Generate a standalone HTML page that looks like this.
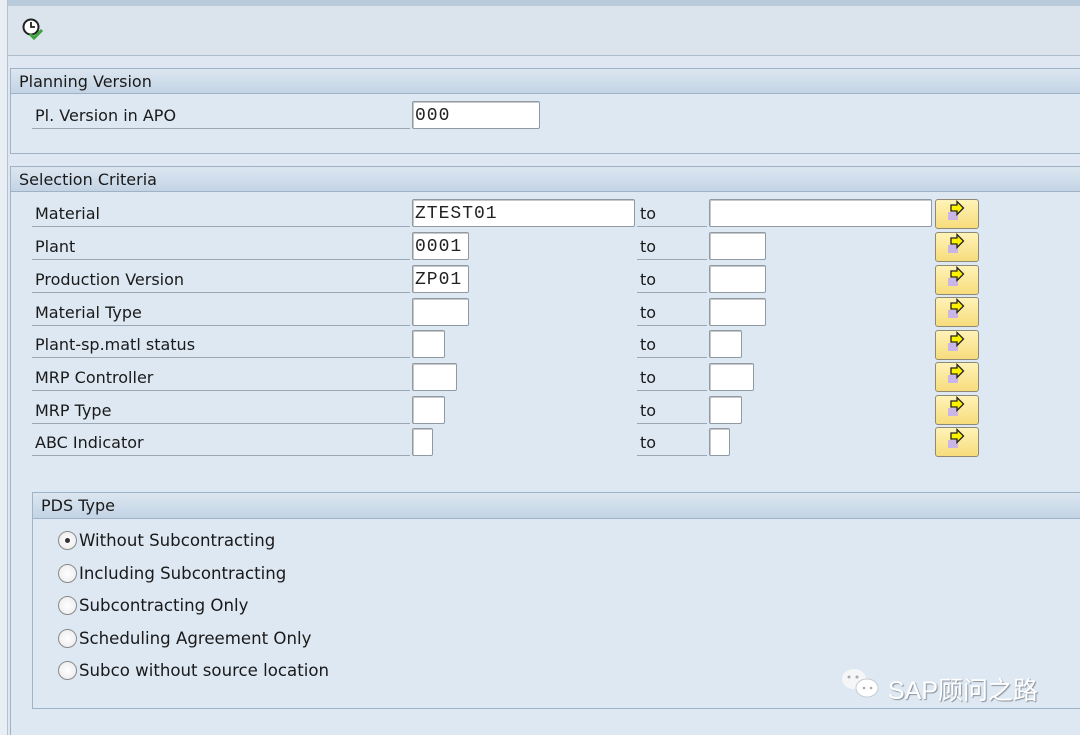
<!DOCTYPE html>
<html><head><meta charset="utf-8"><style>
*{margin:0;padding:0;box-sizing:border-box}
body{width:1080px;height:735px;overflow:hidden;background:#dfe8f2;font-family:"DejaVu Sans","Liberation Sans",sans-serif;font-size:16px;color:#1a1a1a;position:relative}
.abs{position:absolute}
.top{left:0;top:0;width:1080px;height:6px;background:#b9cadb}
.tb{left:8px;top:6px;width:1072px;height:50px;background:#dbe4ed;border-bottom:1px solid #aebdcc}
.lb{left:0;top:0;width:8px;height:735px;background:#e8eef4;border-right:1px solid #b5c3d1}
.grp{border:1px solid #9fb2c6;border-right:none;background:#dde8f3}
.gh{position:absolute;left:0;top:0;right:0;height:25px;background:linear-gradient(#dce6f0,#c3d4e5);border-bottom:1px solid #9fb2c6;padding:3px 0 0 8px;font-size:16px;line-height:20px}
.lab{position:absolute;padding-left:3px;border-bottom:1px solid #9aa7b4;height:27px;font-size:16px;line-height:28px}
.inp{position:absolute;height:28px;background:#fff;border:1px solid #8f9aa5;border-radius:2px;box-shadow:inset 1px 1px 0 #c8c8c8;font-family:"Liberation Mono",monospace;font-size:18px;letter-spacing:1px;line-height:28px;padding-left:2px;color:#222}
.btn{position:absolute;left:935px;width:44px;height:30px;background:linear-gradient(#fff3b8,#f7dc7c);border:1px solid #8e8a75;border-radius:3px}
.rad{position:absolute;left:58px;font-size:16.6px;line-height:20px}
.rad i{display:inline-block;width:19px;height:19px;border:1px solid #8a8a8a;border-radius:50%;background:radial-gradient(#fff,#e8e8e8);vertical-align:-4px;margin-right:2px;position:relative}
.rad i.on::after{content:"";position:absolute;left:6px;top:6px;width:5px;height:5px;border-radius:50%;background:#333}
</style></head><body>
<div class="abs top"></div>
<div class="abs lb"></div>
<div class="abs tb"></div>
<svg class="abs" style="left:21px;top:17px" width="26" height="24" viewBox="0 0 26 24"><circle cx="10" cy="10" r="7.5" fill="#fff" stroke="#222" stroke-width="2"/><path d="M10 5v5h4" stroke="#222" stroke-width="1.8" fill="none"/><path d="M9 17l4 4 8-8" stroke="#3aa33a" stroke-width="3" fill="none"/></svg>

<div class="abs grp" style="left:10px;top:68px;width:1070px;height:86px"><div class="gh">Planning Version</div></div>
<div class="lab" style="left:32px;top:102px;width:378px">Pl. Version in APO</div>
<div class="inp" style="left:412px;top:101px;width:128px">000</div>

<div class="abs grp" style="left:10px;top:166px;width:1070px;height:569px;border-bottom:none"><div class="gh">Selection Criteria</div></div>

<div class="lab" style="left:32px;top:200px;width:378px">Material</div>
<div class="lab" style="left:32px;top:233px;width:378px">Plant</div>
<div class="lab" style="left:32px;top:266px;width:378px">Production Version</div>
<div class="lab" style="left:32px;top:299px;width:378px">Material Type</div>
<div class="lab" style="left:32px;top:331px;width:378px">Plant-sp.matl status</div>
<div class="lab" style="left:32px;top:364px;width:378px">MRP Controller</div>
<div class="lab" style="left:32px;top:397px;width:378px">MRP Type</div>
<div class="lab" style="left:32px;top:429px;width:378px">ABC Indicator</div>

<div class="lab" style="left:637px;top:200px;width:70px">to</div>
<div class="lab" style="left:637px;top:233px;width:70px">to</div>
<div class="lab" style="left:637px;top:266px;width:70px">to</div>
<div class="lab" style="left:637px;top:299px;width:70px">to</div>
<div class="lab" style="left:637px;top:331px;width:70px">to</div>
<div class="lab" style="left:637px;top:364px;width:70px">to</div>
<div class="lab" style="left:637px;top:397px;width:70px">to</div>
<div class="lab" style="left:637px;top:429px;width:70px">to</div>

<div class="inp" style="left:412px;top:199px;width:223px">ZTEST01</div>
<div class="inp" style="left:412px;top:232px;width:57px">0001</div>
<div class="inp" style="left:412px;top:265px;width:57px">ZP01</div>
<div class="inp" style="left:412px;top:298px;width:57px"></div>
<div class="inp" style="left:412px;top:330px;width:33px"></div>
<div class="inp" style="left:412px;top:363px;width:45px"></div>
<div class="inp" style="left:412px;top:396px;width:33px"></div>
<div class="inp" style="left:412px;top:428px;width:21px"></div>

<div class="inp" style="left:709px;top:199px;width:223px"></div>
<div class="inp" style="left:709px;top:232px;width:57px"></div>
<div class="inp" style="left:709px;top:265px;width:57px"></div>
<div class="inp" style="left:709px;top:298px;width:57px"></div>
<div class="inp" style="left:709px;top:330px;width:33px"></div>
<div class="inp" style="left:709px;top:363px;width:45px"></div>
<div class="inp" style="left:709px;top:396px;width:33px"></div>
<div class="inp" style="left:709px;top:428px;width:21px"></div>

<svg width="0" height="0" style="position:absolute"><defs><g id="ar"><rect x="12" y="12" width="10" height="8" fill="#c9b6e6"/><path d="M15 5h6v-3.5l6.5 6.5-6.5 6.5v-3.5h-6z" fill="#fff200" stroke="#222" stroke-width="1.3"/></g></defs></svg>
<div class="btn" style="top:199px"><svg width="42" height="28"><use href="#ar"/></svg></div>
<div class="btn" style="top:232px"><svg width="42" height="28"><use href="#ar"/></svg></div>
<div class="btn" style="top:265px"><svg width="42" height="28"><use href="#ar"/></svg></div>
<div class="btn" style="top:297px"><svg width="42" height="28"><use href="#ar"/></svg></div>
<div class="btn" style="top:330px"><svg width="42" height="28"><use href="#ar"/></svg></div>
<div class="btn" style="top:362px"><svg width="42" height="28"><use href="#ar"/></svg></div>
<div class="btn" style="top:395px"><svg width="42" height="28"><use href="#ar"/></svg></div>
<div class="btn" style="top:427px"><svg width="42" height="28"><use href="#ar"/></svg></div>

<div class="abs grp" style="left:32px;top:492px;width:1048px;height:217px"><div class="gh" style="height:26px">PDS Type</div></div>
<div class="rad" style="top:531px"><i class="on"></i>Without Subcontracting</div>
<div class="rad" style="top:564px"><i></i>Including Subcontracting</div>
<div class="rad" style="top:596px"><i></i>Subcontracting Only</div>
<div class="rad" style="top:629px"><i></i>Scheduling Agreement Only</div>
<div class="rad" style="top:661px"><i></i>Subco without source location</div>

<svg class="abs" style="left:840px;top:666px" width="44" height="36"><ellipse cx="14" cy="13" rx="12" ry="10" fill="#f4f6f8"/><ellipse cx="27" cy="22" rx="11" ry="9" fill="#fff" stroke="#c8ccd0"/><circle cx="9" cy="11" r="1.5" fill="#aaa"/><circle cx="17" cy="11" r="1.5" fill="#aaa"/><circle cx="24" cy="22" r="1.3" fill="#aaa"/><circle cx="31" cy="22" r="1.3" fill="#aaa"/></svg>
<div class="abs" style="left:888px;top:671px;font-size:25px;color:#fff;text-shadow:1px 1px 1px #8a9099;font-family:'Liberation Sans','Noto Sans CJK SC',sans-serif">SAP顾问之路</div>
</body></html>
